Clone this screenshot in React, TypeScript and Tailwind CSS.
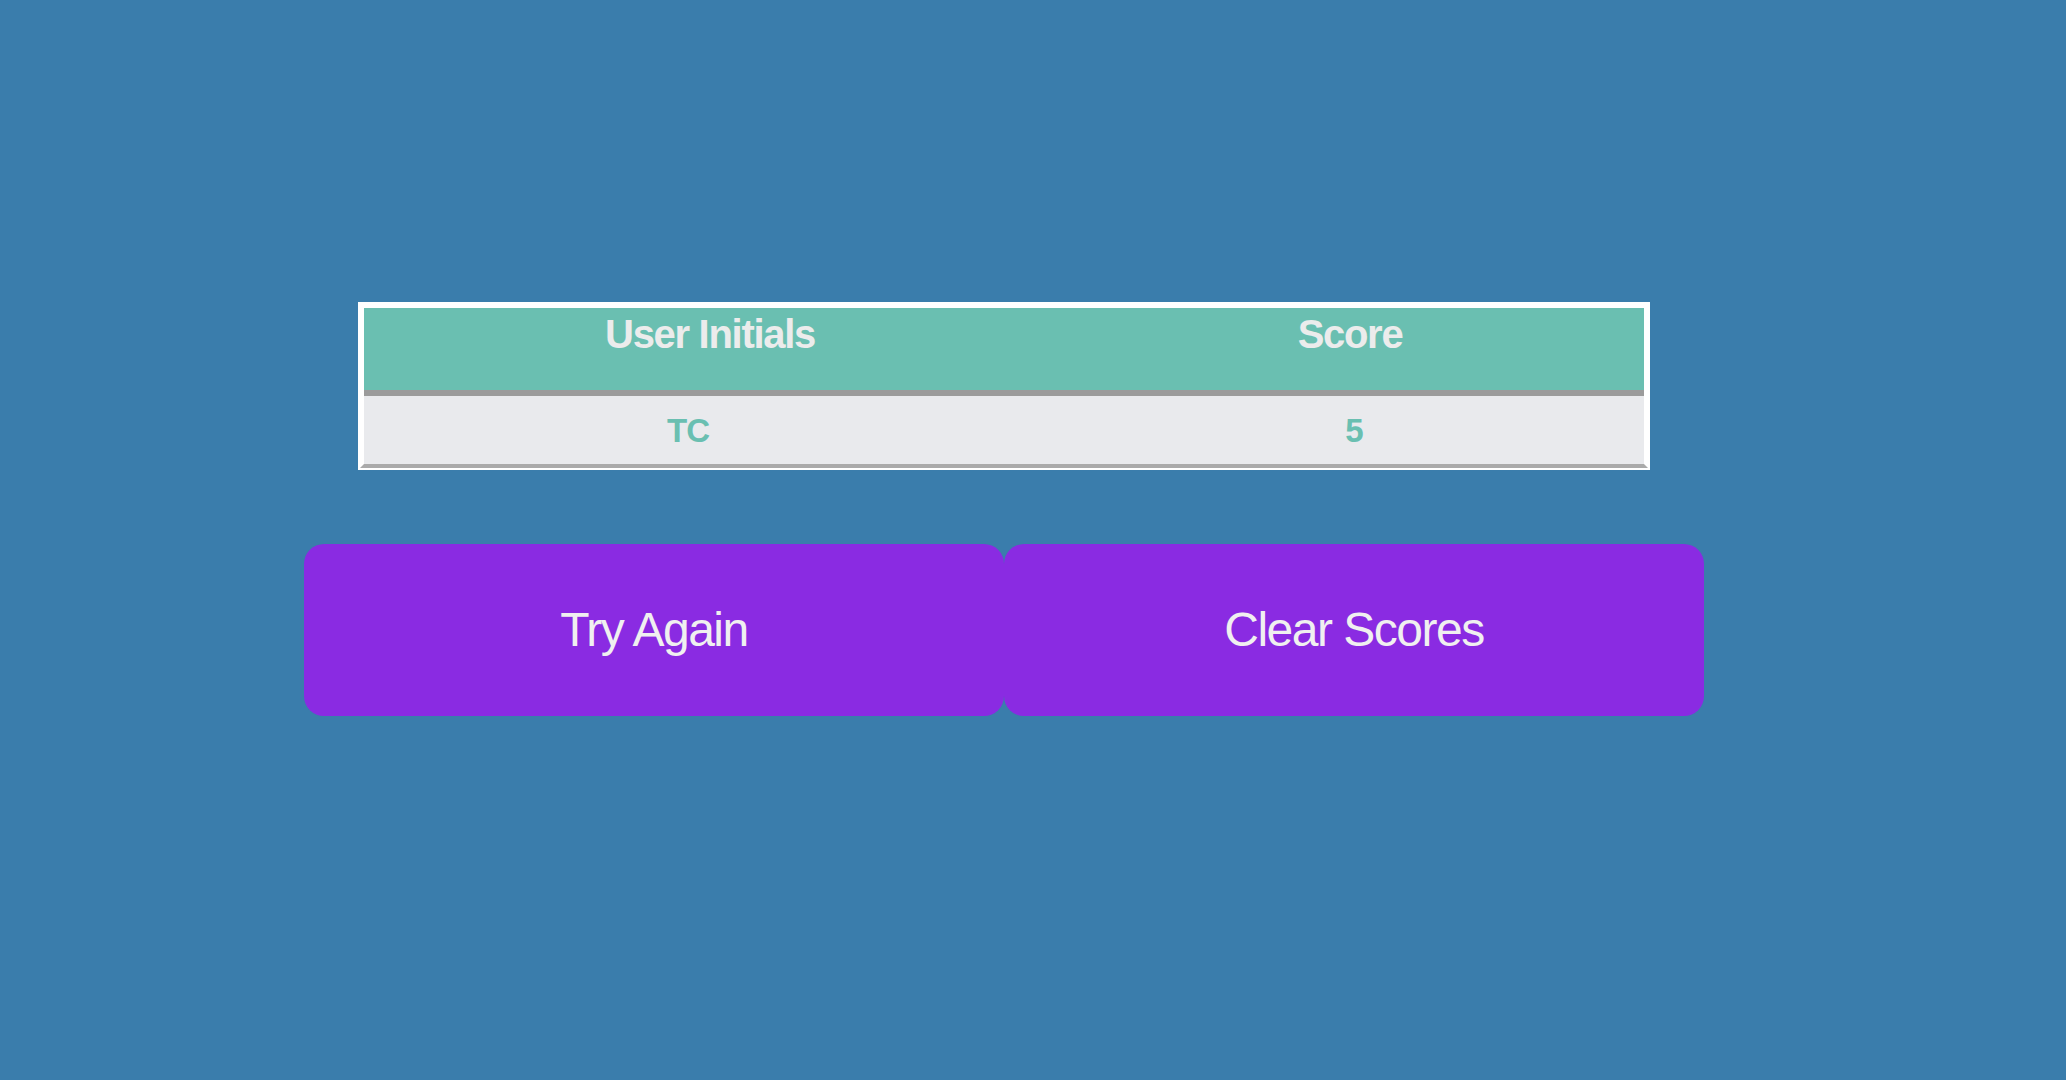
import React from "react";

export default function App() {
  return (
    <div
      className="w-full h-[1080px] bg-[#3a7dac] flex flex-col items-center pr-[58px] pt-[302px]"
      style={{ fontFamily: '"Liberation Sans", Arial, sans-serif' }}
    >
      <div className="w-[1292px] border-2 border-white">
        <div className="border-x-4 border-t-4 border-white border-b-4 border-b-[#aaaaaa]">
          <div className="grid grid-cols-[692px_588px] h-[88px] bg-[#6abfb1] border-b-[6px] border-[#9b9b9b] text-[#ececec] font-bold text-[40px] tracking-[-1.3px] leading-[44px]">
            <div className="text-center pt-[4px]">User Initials</div>
            <div className="text-center pt-[4px]">Score</div>
          </div>
          <div className="grid grid-cols-[648px_632px] h-[68px] items-center bg-[#e9eaed] text-[#6abfb1] font-bold text-[33px] tracking-[-1px] leading-[40px]">
            <div className="text-center pt-[1px]">TC</div>
            <div className="text-center pt-[1px] pl-[52px]">5</div>
          </div>
        </div>
      </div>
      <div className="flex mt-[74px]">
        <button className="w-[700px] h-[172px] rounded-[20px] bg-[#8a2be2] text-[#f0f0f0] text-[48px] tracking-[-1.5px] flex items-center justify-center">
          Try Again
        </button>
        <button className="w-[700px] h-[172px] rounded-[20px] bg-[#8a2be2] text-[#f0f0f0] text-[48px] tracking-[-1.5px] flex items-center justify-center">
          Clear Scores
        </button>
      </div>
    </div>
  );
}
